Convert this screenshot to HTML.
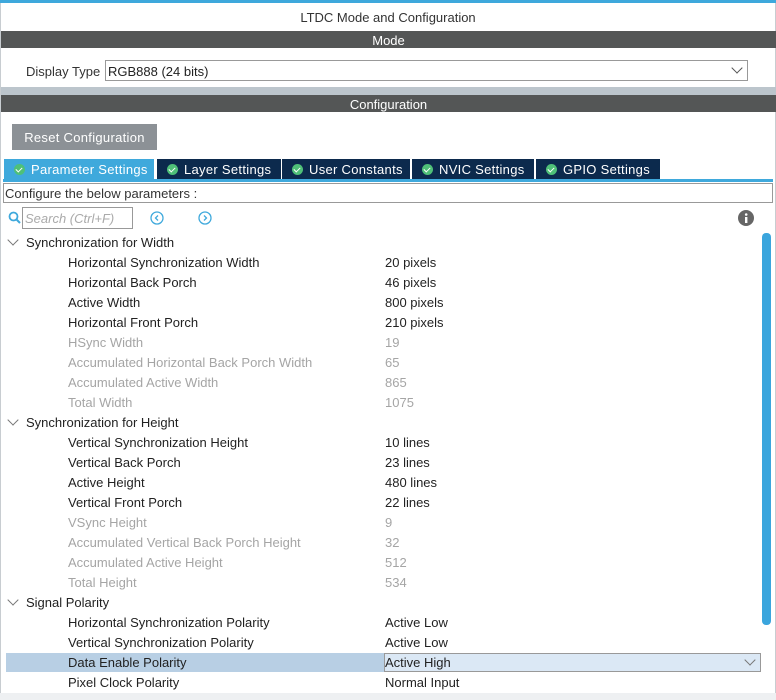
<!DOCTYPE html>
<html><head><style>
*{margin:0;padding:0;box-sizing:border-box}
body{width:776px;height:700px;overflow:hidden;background:#fff;font-family:"Liberation Sans",sans-serif;font-size:13px;color:#222;position:relative}
.a{position:absolute;white-space:nowrap}
.bar{position:absolute;left:1px;width:775px;height:17px;background:#545656;color:#fff;text-align:center;line-height:19px}
.tab{position:absolute;top:159px;height:20px;background:#0c2a4d;color:#fff;line-height:21px;padding-left:10px;letter-spacing:.3px}
.tab i{display:inline-block;width:11px;height:11px;border-radius:50%;background:#4fc078;vertical-align:-1px;margin-right:6px;position:relative}
.tab i:after{content:"";position:absolute;left:3px;top:2px;width:3px;height:5px;border:solid #fff;border-width:0 1.5px 1.5px 0;transform:rotate(45deg)}
.r{position:absolute;left:68px;height:20px;line-height:22px}
.v{position:absolute;left:385px;height:20px;line-height:22px}
.g{color:#a5a5a5}
.h{position:absolute;left:26px;height:20px;line-height:22px}
.c{position:absolute;left:9px;width:8px;height:8px;border:solid #777;border-width:0 1px 1px 0;transform:rotate(45deg)}
</style></head><body>
<div class="a" style="left:0;top:0;width:776px;height:3px;background:#3ea8dc"></div>
<div class="a" style="left:0;top:3px;width:1px;height:697px;background:#c8cdd1"></div>
<div class="a" style="left:775px;top:3px;width:1px;height:697px;background:#c8cdd1"></div>
<div class="a" style="left:0;top:10px;width:776px;text-align:center;color:#333">LTDC Mode and Configuration</div>
<div class="bar" style="top:31px">Mode</div>
<div class="a" style="left:26px;top:64px;color:#333">Display Type</div>
<div class="a" style="left:105px;top:60px;width:643px;height:21px;border:1px solid #999;line-height:21px;padding-left:2px">RGB888 (24 bits)<span style="position:absolute;right:6px;top:3px;width:8px;height:8px;border:solid #555;border-width:0 1px 1px 0;transform:rotate(45deg)"></span></div>
<div class="a" style="left:1px;top:87px;width:775px;height:8px;background:#bcc5cc"></div>
<div class="bar" style="top:95px">Configuration</div>
<div class="a" style="left:12px;top:124px;width:145px;height:26px;background:#8c9196;color:#fff;line-height:28px;text-align:center;letter-spacing:.3px">Reset Configuration</div>
<div class="tab" style="left:4px;width:150px;background:#3fa9dc"><i></i>Parameter Settings</div>
<div class="tab" style="left:157px;width:124px"><i></i>Layer Settings</div>
<div class="tab" style="left:282px;width:128px"><i></i>User Constants</div>
<div class="tab" style="left:412px;width:122px"><i></i>NVIC Settings</div>
<div class="tab" style="left:536px;width:124px"><i></i>GPIO Settings</div>
<div class="a" style="left:3px;top:179px;width:770px;height:3px;background:#3fa9dc"></div>
<div class="a" style="left:3px;top:183px;width:770px;height:20px;border:1px solid #999;line-height:20px;padding-left:1px;color:#333">Configure the below parameters :</div>
<svg class="a" style="left:8px;top:211px" width="14" height="14"><circle cx="5.5" cy="5.5" r="4" fill="none" stroke="#3fa9dc" stroke-width="1.8"/><line x1="8.5" y1="8.5" x2="12" y2="12" stroke="#3fa9dc" stroke-width="2"/></svg>
<div class="a" style="left:22px;top:207px;width:111px;height:22px;border:1px solid #999;line-height:21px;padding-left:2px;color:#aaa;font-style:italic">Search (Ctrl+F)</div>
<svg class="a" style="left:150px;top:211px" width="14" height="14"><circle cx="7" cy="7" r="6" fill="none" stroke="#3fa9dc" stroke-width="1.3"/><path d="M8 4.5L5.5 7L8 9.5" fill="none" stroke="#3fa9dc" stroke-width="1.3"/></svg>
<svg class="a" style="left:198px;top:211px" width="14" height="14"><circle cx="7" cy="7" r="6" fill="none" stroke="#3fa9dc" stroke-width="1.3"/><path d="M6 4.5L8.5 7L6 9.5" fill="none" stroke="#3fa9dc" stroke-width="1.3"/></svg>
<svg class="a" style="left:738px;top:210px" width="16" height="16"><circle cx="8" cy="8" r="8" fill="#666"/><rect x="7" y="7" width="2.4" height="6" fill="#fff"/><circle cx="8.2" cy="4.5" r="1.3" fill="#fff"/></svg>
<div class="a" style="left:762px;top:233px;width:9px;height:392px;background:#3aa5dd;border-radius:4px"></div>

<div class="c" style="top:236px"></div><div class="h" style="top:232px">Synchronization for Width</div>
<div class="r" style="top:252px">Horizontal Synchronization Width</div><div class="v" style="top:252px">20 pixels</div>
<div class="r" style="top:272px">Horizontal Back Porch</div><div class="v" style="top:272px">46 pixels</div>
<div class="r" style="top:292px">Active Width</div><div class="v" style="top:292px">800 pixels</div>
<div class="r" style="top:312px">Horizontal Front Porch</div><div class="v" style="top:312px">210 pixels</div>
<div class="r g" style="top:332px">HSync Width</div><div class="v g" style="top:332px">19</div>
<div class="r g" style="top:352px">Accumulated Horizontal Back Porch Width</div><div class="v g" style="top:352px">65</div>
<div class="r g" style="top:372px">Accumulated Active Width</div><div class="v g" style="top:372px">865</div>
<div class="r g" style="top:392px">Total Width</div><div class="v g" style="top:392px">1075</div>
<div class="c" style="top:416px"></div><div class="h" style="top:412px">Synchronization for Height</div>
<div class="r" style="top:432px">Vertical Synchronization Height</div><div class="v" style="top:432px">10 lines</div>
<div class="r" style="top:452px">Vertical Back Porch</div><div class="v" style="top:452px">23 lines</div>
<div class="r" style="top:472px">Active Height</div><div class="v" style="top:472px">480 lines</div>
<div class="r" style="top:492px">Vertical Front Porch</div><div class="v" style="top:492px">22 lines</div>
<div class="r g" style="top:512px">VSync Height</div><div class="v g" style="top:512px">9</div>
<div class="r g" style="top:532px">Accumulated Vertical Back Porch Height</div><div class="v g" style="top:532px">32</div>
<div class="r g" style="top:552px">Accumulated Active Height</div><div class="v g" style="top:552px">512</div>
<div class="r g" style="top:572px">Total Height</div><div class="v g" style="top:572px">534</div>
<div class="c" style="top:596px"></div><div class="h" style="top:592px">Signal Polarity</div>
<div class="r" style="top:612px">Horizontal Synchronization Polarity</div><div class="v" style="top:612px">Active Low</div>
<div class="r" style="top:632px">Vertical Synchronization Polarity</div><div class="v" style="top:632px">Active Low</div>
<div class="a" style="left:6px;top:653px;width:378px;height:19px;background:#b8cfe4"></div>
<div class="a" style="left:384px;top:653px;width:377px;height:19px;background:#dbe8f5;border:1px solid #999"></div>
<div class="a" style="left:746px;top:656px;width:8px;height:8px;border:solid #777;border-width:0 1px 1px 0;transform:rotate(45deg)"></div>
<div class="r" style="top:652px">Data Enable Polarity</div><div class="v" style="top:652px">Active High</div>
<div class="r" style="top:672px">Pixel Clock Polarity</div><div class="v" style="top:672px">Normal Input</div>
<div class="a" style="left:0;top:693px;width:776px;height:7px;background:#eef0f2"></div>
</body></html>
